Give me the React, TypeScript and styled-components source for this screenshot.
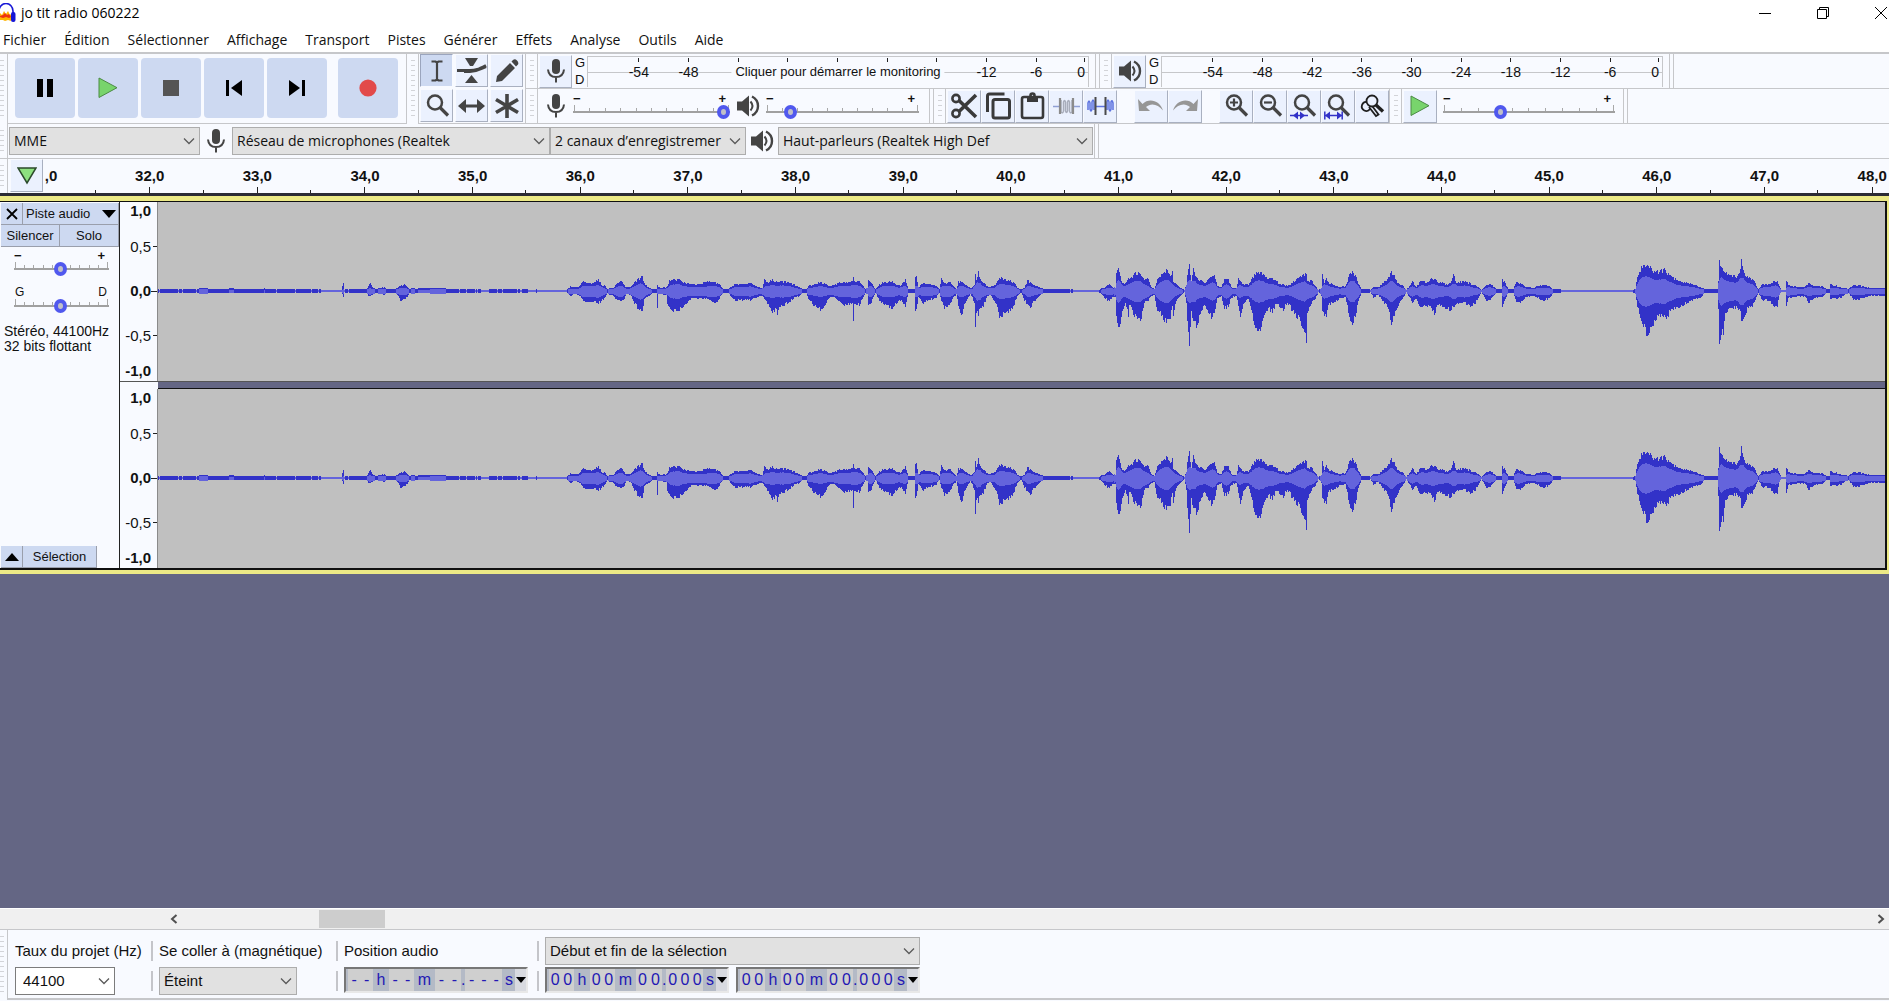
import React from "react";
import styled, { createGlobalStyle } from "styled-components";

const ui = `"Open Sans", "Noto Sans", sans-serif`;
const arial = `"Liberation Sans", Arial, sans-serif`;

const c = {
  bar: "#f8faff",
  line: "#c6c7ca",
  button: "#cdd9f1",
  tool: "#ebf1fe",
  icon: "#444444",
  slate: "#646684",
  wave: "#3232c8",
  rms: "#6464dc",
  grey: "#c0c0c0",
};

const Global = createGlobalStyle`
  * { box-sizing: border-box; }
  html, body { margin: 0; padding: 0; }
  body { background: #fff; color: #111; font-family: ${arial}; overflow: hidden; }
  button, select, input { font: inherit; color: inherit; margin: 0; }
  button { border: 0; padding: 0; cursor: default; }
  svg { display: block; }
`;

const Window = styled.div`
  display: flex;
  flex-direction: column;
  height: 100vh;
  overflow: hidden;
`;

/* ---------- title and menu ---------- */

const TitleBar = styled.header`
  display: flex;
  align-items: center;
  height: 27px;
  flex: none;
  padding-bottom: 1px;
  background: #fff;
`;

const Title = styled.h1`
  flex: 1;
  margin: 0 0 0 5px;
  font: 400 14px/24px ${ui};
  color: #000;
`;

const WindowButtons = styled.div`
  display: flex;
  gap: 32px;
  margin-right: -5px;
`;

const WindowButton = styled.button`
  display: grid;
  place-items: center;
  width: 26px;
  height: 26px;
  background: none;
`;

const MenuBar = styled.nav`
  display: flex;
  gap: 18px;
  height: 27px;
  flex: none;
  padding-left: 3px;
  background: #fff;
  border-bottom: 2px solid ${c.line};
`;

const MenuItem = styled.button`
  background: none;
  font: 400 14px/24px ${ui};
`;

/* ---------- toolbars ---------- */

const Toolbars = styled.div`
  display: flex;
  flex: none;
  background: ${c.bar};
`;

const Grip = styled.div<{ $edge?: boolean }>`
  flex: none;
  width: ${(p) => (p.$edge ? 8 : 13)}px;
  padding: 6px 3px 4px ${(p) => (p.$edge ? 0 : 4)}px;
  border: solid ${c.line};
  border-width: 0 1px 0 ${(p) => (p.$edge ? 0 : 1)}px;
  background: repeating-linear-gradient(#d3d4d8 0 1px, transparent 1px 5px) content-box;
`;

const Transport = styled.div`
  display: flex;
  align-items: center;
  gap: 11px;
  padding: 0 8px 2px 7px;
  border-bottom: 1px solid ${c.line};
`;

const TransportGroup = styled.div`
  display: grid;
  grid-auto-flow: column;
  grid-auto-columns: 60px;
  gap: 3px;
`;

const BigButton = styled.button`
  display: grid;
  place-items: center;
  width: 60px;
  height: 60px;
  border-radius: 4px;
  background: ${c.button};
`;

const ToolButton = styled.button<{ $on?: boolean; $wide?: boolean }>`
  display: grid;
  place-items: center;
  flex: none;
  width: ${(p) => (p.$wide ? 34 : 33)}px;
  height: 33px;
  background: ${(p) => (p.$on ? c.button : c.tool)};
  border: 1px solid;
  border-color: ${(p) => (p.$on ? "#9ba5bd #f8faff #f8faff #9ba5bd" : "#f8faff #a9b0c0 #a9b0c0 #f8faff")};
`;

const Tools = styled.div`
  display: grid;
  grid-template-columns: repeat(3, 33px);
  gap: 2px;
  padding: 0 2px 0 1px;
  align-content: start;
  border-bottom: 1px solid ${c.line};
`;

const Rows = styled.div`
  flex: 1;
  min-width: 0;
`;

const Row = styled.div`
  display: flex;
  align-items: stretch;
  height: 35px;
  border-bottom: 1px solid ${c.line};
  background: ${c.bar};
`;

const Section = styled.section<{ $end?: number }>`
  display: flex;
  flex: none;
  align-items: center;
  padding: 0 ${(p) => p.$end ?? 0}px 0 1px;
`;

const Divider = styled.div`
  flex: none;
  width: 4px;
  border-left: 1px solid ${c.line};
`;

const RowEnd = styled.div`
  width: 5px;
  flex: none;
  border: solid ${c.line};
  border-width: 0 1px;
`;

const Gap = styled.div`
  width: 17px;
`;

const IconCell = styled.span<{ $w: number }>`
  display: grid;
  place-items: center;
  flex: none;
  width: ${(p) => p.$w}px;
`;

/* ---------- level meters ---------- */

const MeterChannels = styled.div`
  display: flex;
  flex-direction: column;
  width: 15px;
  padding-left: 3px;
  font-size: 13px;
  line-height: 17px;
`;

const MeterBox = styled.div`
  position: relative;
  display: flex;
  width: 502px;
  height: 31px;
  padding-left: 26px;
  border: solid ${c.line};
  border-width: 1px 1px 0;
  background: linear-gradient(${c.line}, ${c.line}) 0 15px / 100% 1px no-repeat;
`;

const MeterScale = styled.div`
  display: grid;
  grid-template-columns: repeat(9, 1fr);
  flex: 0 0 447px;
`;

const MeterMark = styled.div<{ $end?: boolean }>`
  display: flex;
  flex-direction: column;
  flex: 1;
  gap: 2px;
  align-items: ${(p) => (p.$end ? "flex-end" : "center")};
  padding-right: ${(p) => (p.$end ? 3 : 0)}px;
  font-size: 14px;
  line-height: 16px;
  &::before {
    content: "";
    width: 1px;
    height: 4px;
    margin-top: 1px;
    background: #222;
  }
`;

const MeterHint = styled.button`
  position: absolute;
  left: 50%;
  top: 5px;
  height: 20px;
  padding: 0 4px;
  transform: translateX(-50%);
  white-space: nowrap;
  background: ${c.bar};
  font-size: 13px;
  line-height: 20px;
`;

/* ---------- sliders ---------- */

const SliderBox = styled.label<{ $w?: number }>`
  display: flex;
  flex-direction: column;
  flex: none;
  width: ${(p) => (p.$w ? p.$w + "px" : "auto")};
`;

const SliderEnds = styled.span<{ $letters?: boolean }>`
  display: flex;
  justify-content: space-between;
  padding: 0 ${(p) => (p.$letters ? 2 : 4)}px 0 ${(p) => (p.$letters ? 1 : 0)}px;
  font-size: ${(p) => (p.$letters ? 12 : 13)}px;
  line-height: ${(p) => (p.$letters ? 14 : 12)}px;
  font-weight: ${(p) => (p.$letters ? 400 : 700)};
`;

const SliderStack = styled.span`
  display: grid;
  & > * { grid-area: 1 / 1; }
`;

const SliderTicks = styled.span`
  display: flex;
  justify-content: space-between;
  align-items: flex-end;
  height: 8px;
  padding: 0 1px;
  border-bottom: 2px solid #a0a0a0;
  i { width: 1px; height: 3px; background: #a8a8a8; }
  i:first-child, i:last-child { height: 6px; }
`;

const Range = styled.input`
  appearance: none;
  width: 100%;
  height: 14px;
  background: transparent;
  &::-webkit-slider-thumb {
    appearance: none;
    width: 13px;
    height: 14px;
    border: 4px solid #5058ee;
    border-radius: 50%;
    background: #c0c0c8;
  }
`;

/* ---------- drop-downs ---------- */

const SelectBox = styled.span<{ $w?: number; $white?: boolean }>`
  display: grid;
  flex: none;
  align-items: center;
  width: ${(p) => (p.$w ? p.$w + "px" : "auto")};
  & > * { grid-area: 1 / 1; }
  svg { justify-self: end; margin-right: 5px; pointer-events: none; }
  select {
    appearance: none;
    width: 100%;
    height: 28px;
    padding: 0 22px 0 ${(p) => (p.$white ? 7 : 4)}px;
    border: 1px solid ${(p) => (p.$white ? "#7c7c7c" : "#adadad")};
    border-radius: 0;
    background: ${(p) => (p.$white ? "#fff" : "#e1e1e1")};
    text-overflow: clip;
  }
`;

const DeviceRow = styled(Row)`
  flex: none;
  font: 400 14px/20px ${ui};
`;

const Devices = styled.div`
  display: flex;
  align-items: center;
  padding: 0 1px;
`;

/* ---------- timeline ---------- */

const Timeline = styled.div`
  display: flex;
  flex: none;
  height: 37px;
  background: ${c.bar};
  border-bottom: 3px solid #2b2b35;
`;

const PinSlot = styled.div`
  display: flex;
  flex: none;
  width: 34px;
  padding-left: 2px;
`;

const Ruler = styled.div`
  flex: 1;
  min-width: 0;
  overflow: hidden;
`;

const RulerMarks = styled.div`
  display: flex;
  height: 100%;
  margin-left: -2.914%;
`;

const Second = styled.div<{ $first?: boolean }>`
  display: flex;
  flex-direction: column;
  flex: 0 0 5.664%;
  justify-content: space-between;
  align-items: center;
  padding: 8px 0 0 ${(p) => (p.$first ? 18 : 0)}px;
  font: 700 15px/18px ${arial};
  background: linear-gradient(#222, #222) right bottom / 1px 3px no-repeat;
  &::after {
    content: "";
    width: ${(p) => (p.$first ? 0 : 1)}px;
    height: 6px;
    background: #222;
  }
`;

/* ---------- tracks ---------- */

const Canvas = styled.main`
  flex: 1;
  min-height: 0;
  background: ${c.slate};
`;

const Track = styled.section`
  display: flex;
  border: solid #ece986;
  border-width: 5px 2px 4px 0;
`;

const TrackInner = styled.div`
  display: flex;
  flex: 1;
  min-width: 0;
  border: solid #101010;
  border-width: 1px 2px 2px 0;
`;

const Panel = styled.div`
  display: flex;
  flex-direction: column;
  justify-content: space-between;
  flex: none;
  width: 120px;
  padding: 1px 0 0 1px;
  background: ${c.bar};
  border-right: 1px solid #222;
  font-size: 13px;
  line-height: 15px;
`;

const PanelRow = styled.div<{ $cols: string }>`
  display: grid;
  grid-template-columns: ${(p) => p.$cols};
`;

const PanelButton = styled.button<{ $spread?: boolean }>`
  display: flex;
  align-items: center;
  justify-content: ${(p) => (p.$spread ? "space-between" : "center")};
  height: 22px;
  padding: ${(p) => (p.$spread ? "0 2px 0 3px" : "0")};
  background: ${c.button};
  border: solid #9a9fac;
  border-width: 0 1px 1px 0;
`;

const PanelSliders = styled.div`
  display: flex;
  flex-direction: column;
  gap: 9px;
  width: 95px;
  margin: 3px 0 0 13px;
`;

const Info = styled.p`
  margin: 11px 0 0 3px;
  font-size: 14px;
  line-height: 15px;
  white-space: nowrap;
`;

const Channels = styled.div`
  flex: 1;
  min-width: 0;
`;

const ChannelGap = styled.div`
  display: grid;
  grid-template-columns: 38px 1fr;
  height: 8px;
  background: ${c.bar};
  border-top: 1px solid #555;
  &::after {
    content: "";
    grid-column: 2;
    background: ${c.slate};
    border-bottom: 1px solid #111;
  }
`;

const Channel = styled.div`
  display: grid;
  grid-template-columns: 38px 1fr;
  height: 179px;
  background: ${c.grey};
`;

const Scale = styled.div`
  display: grid;
  grid-template-rows: 1fr 2fr 2fr 2fr 1fr;
  padding-bottom: 1px;
  background: ${c.bar};
  border-right: 1px solid #8a8a8a;
`;

const ScaleMark = styled.div<{ $bold?: boolean; $at?: string; $tick: number }>`
  display: flex;
  align-items: center;
  align-self: ${(p) => p.$at ?? "center"};
  justify-content: flex-end;
  gap: ${(p) => 6 - p.$tick}px;
  font-size: 15px;
  line-height: 18px;
  font-weight: ${(p) => (p.$bold ? 700 : 400)};
  &::after {
    content: "";
    width: ${(p) => p.$tick}px;
    height: 1px;
    background: #222;
  }
`;

const WaveSvg = styled.svg`
  width: 100%;
  height: 100%;
`;

/* ---------- scrollbar ---------- */

const ScrollRow = styled.div`
  display: flex;
  flex: none;
  height: 22px;
  padding: 1px 0 1px 165px;
  background: #f0f0f0;
  border-top: 1px solid #fff;
  border-bottom: 1px solid ${c.line};
`;

const ScrollArrow = styled.button`
  display: grid;
  place-items: center;
  width: 17px;
  background: none;
`;

const ScrollTrack = styled.div`
  flex: 1;
  display: flex;
`;

const ScrollThumb = styled.div`
  margin-left: 8.1%;
  width: 3.9%;
  background: #cdcdcd;
`;

/* ---------- selection bar ---------- */

const SelectionBar = styled.footer`
  display: flex;
  flex: none;
  height: 71px;
  padding-bottom: 1px;
  background: ${c.bar};
  font-size: 15px;
  line-height: 20px;
`;

const SelectionBody = styled.div`
  display: flex;
  flex: 1;
  padding: 7px 0 3px 7px;
  border-bottom: 2px solid ${c.line};
`;

const Field = styled.div<{ $w: number }>`
  display: flex;
  flex-direction: column;
  gap: 2px;
  flex: none;
  width: ${(p) => p.$w}px;
`;

const FieldLabel = styled.label`
  height: 28px;
  line-height: 28px;
  white-space: nowrap;
`;

const Bars = styled.div`
  display: flex;
  flex-direction: column;
  gap: 10px;
  flex: none;
  width: 8px;
  margin-left: 8px;
  padding-top: 4px;
  &::before, &::after {
    content: "";
    width: 2px;
    height: 20px;
    background: #c4c5ca;
  }
`;

const TimeRow = styled.div`
  display: flex;
  gap: 7px;
`;

const TimeBox = styled.div`
  display: flex;
  width: 184px;
  height: 26px;
  padding-left: 2px;
  border: 2px solid;
  border-color: #777 #e8e8e8 #e8e8e8 #777;
  background: #b4bac6;
  color: #2318b4;
  font-size: 16px;
  line-height: 22px;
`;

const TimePart = styled.span<{ $w: number; $digits?: boolean }>`
  display: flex;
  flex: 0 0 ${(p) => p.$w}px;
  justify-content: space-around;
  background: ${(p) => (p.$digits ? "#cfcfcf" : "transparent")};
`;

const TimeMenu = styled.button`
  flex: 1;
  display: grid;
  place-items: center;
  background: #d8dae0;
`;

/* ---------- icons ---------- */

const Mic = () => (
  <svg width="20" height="26" viewBox="0 0 20 26" fill="none" stroke={c.icon} strokeWidth="2">
    <rect x="6" y="1" width="8" height="15" rx="4" fill={c.icon} stroke="none" />
    <path d="M2 11.500c.4 5 3.400 7.500 8 7.500s7.600-2.500 8-7.500M10 19v5.500" />
  </svg>
);

const Speaker = () => (
  <svg width="24" height="22" viewBox="0 0 24 22" fill="none" stroke={c.icon} strokeWidth="2">
    <path d="M1 6.500h5l7-6v21l-7-6H1z" fill={c.icon} stroke="none" />
    <path d="M14.500 6.500q4 4.500 0 9" />
    <path d="M16 1.500c8 4 8 15 0 19" strokeWidth="2.400" />
  </svg>
);

const Chevron = () => (
  <svg width="12" height="8" viewBox="0 0 12 8" fill="none" stroke="#5a5a5a" strokeWidth="1.300">
    <path d="M1 1.500l5 5 5-5" />
  </svg>
);

const PlayIcon = () => (
  <svg width="20" height="22" viewBox="0 0 20 22">
    <path d="M1 1v19.500L19 10.700z" fill="#78d46c" stroke="#4b8a45" />
  </svg>
);

const Lens = ({ children }: { children?: React.ReactNode }) => (
  <svg width="28" height="28" viewBox="0 0 28 28" fill="none" stroke={c.icon} strokeWidth="2.200">
    <circle cx="12" cy="10.500" r="7" strokeWidth="2.500" />
    <path d="M17 15.500l8 8" strokeWidth="3.200" />
    {children}
  </svg>
);

const Logo = () => (
  <svg width="16" height="20" viewBox="0 0 16 20">
    <path d="M-1 13V8a7 7.500 0 0 1 14 0v5" fill="none" stroke="#1717d6" strokeWidth="1.600" />
    <path d="M0 10l2 2 2-4 2 3 2-3 2 4 1-1v7l-3-1-3 1-2-1H0z" fill="#ffb400" />
    <path d="M0 13l3-1 2-2 2 2 2-1 2 3-2 1-3-1-3 1-3-1z" fill="#ee3311" />
    <rect x="11" y="9" width="4.500" height="10" rx="2" fill="#1717d6" />
  </svg>
);

const SelectTool = () => (
  <svg width="14" height="24" viewBox="0 0 14 24" fill="none" stroke={c.icon} strokeWidth="2.200">
    <path d="M1.500 2.500h4l1.500 1 1.500-1h4M7 3v18M1.500 21.500h4l1.500-1 1.500 1h4" />
  </svg>
);

const EnvelopeTool = () => (
  <svg width="32" height="28" viewBox="0 0 32 28" fill={c.icon}>
    <path d="M9 1h13l-5 8h-3zM9 26h13l-6.500-8z" />
    <path d="M1 13.500h13c6 0 8-1 16-5M8 14.500h6c7 0 9-2 16-5" fill="none" stroke={c.icon} strokeWidth="3" />
  </svg>
);

const DrawTool = () => (
  <svg width="26" height="26" viewBox="0 0 26 26" fill={c.icon}>
    <path d="M2 24l1-6L16 5l5 5L8 23zM17.500 3.500l1.500-1.500q2-1.500 4 0.500t1 4L22 8.500z" />
  </svg>
);

const ShiftTool = () => (
  <svg width="27" height="16" viewBox="0 0 27 16" fill={c.icon}>
    <path d="M0 8l8-7v5.400h11V1l8 7-8 7V9.600H8V15z" />
  </svg>
);

const MultiTool = () => (
  <svg width="26" height="26" viewBox="0 0 26 26" stroke={c.icon} strokeWidth="3.600">
    <path d="M13 1v24M2 6.500l22 13M24 6.500L2 19.500" />
  </svg>
);

const Cut = () => (
  <svg width="28" height="26" viewBox="0 0 28 26" fill="none" stroke="#3a3a3a" strokeWidth="2.600">
    <circle cx="6" cy="5.500" r="3.600" />
    <circle cx="6" cy="20.500" r="3.600" />
    <path d="M9 7.500L26 24M9 18.500L26 2" strokeWidth="3.600" />
  </svg>
);

const Copy = () => (
  <svg width="27" height="28" viewBox="0 0 27 28" fill="none" stroke="#3a3a3a" strokeWidth="3">
    <path d="M2.500 20V4q0-2 2-2h15" />
    <rect x="8" y="7.500" width="16.500" height="18.500" rx="2" />
  </svg>
);

const Paste = () => (
  <svg width="25" height="28" viewBox="0 0 25 28" fill="none" stroke="#3a3a3a" strokeWidth="2.600">
    <rect x="2" y="5" width="21" height="21" rx="2" />
    <path d="M7 4h11v6H7z" fill="#3a3a3a" stroke="none" />
    <circle cx="12.500" cy="3.500" r="2" />
  </svg>
);

const Trim = () => (
  <svg width="27" height="20" viewBox="0 0 27 20" fill="none">
    <path d="M0 10.500h6M21 10.500h6" stroke="#8f9fd4" strokeWidth="1.500" />
    <path d="M8 4v12q2 2 2.500-1V6q1-3 2 0v9q1 3 2 0V6q1-3 2 0v9q.5 3 2.500 1V4" stroke="#a8adbb" strokeWidth="1.500" />
    <path d="M7 2v16M20 2v16" stroke="#8b8b8b" strokeWidth="2.200" />
  </svg>
);

const Silence = () => (
  <svg width="27" height="20" viewBox="0 0 27 20" fill="none">
    <path d="M1 14V7q1-4 2 0v6q1 4 2 0V6q1-4 2 0v8M20 14V6q1-4 2 0v7q1 4 2 0V6q1-3 2 1v7M8 10.500h11" stroke="#5d73e0" strokeWidth="1.500" />
    <path d="M8.500 1v18M18.500 1v18" stroke="#4a4a4a" strokeWidth="2" />
  </svg>
);

const Undo = ({ flip }: { flip?: boolean }) => (
  <svg width="26" height="14" viewBox="0 0 26 14" fill="#969696">
    <g transform={flip ? "matrix(-1 0 0 1 26 0)" : undefined}>
      <path d="M0 0l1 12h11l-4-4C13 3.500 20 5 25 11.500 22 1.500 11-1.500 4.500 5z" />
    </g>
  </svg>
);

const ZoomToggle = () => (
  <svg width="26" height="26" viewBox="0 0 26 26" fill="none" stroke="#1f1f1f" strokeWidth="1.800">
    <circle cx="13" cy="8" r="5.500" />
    <path d="M8 9a4.500 4.500 0 1 0 3 7M10 14l7 9 2.500-1.500-6-8" />
    <path d="M17 12l7 6.500" strokeWidth="3.400" />
  </svg>
);

/* ---------- controls ---------- */

const Slider = ({ label, value, w, ends = ["−", "+"], letters }: {
  label: string; value: number; w?: number; ends?: string[]; letters?: boolean;
}) => (
  <SliderBox $w={w}>
    <SliderEnds $letters={letters}>{ends.map((e) => <span key={e}>{e}</span>)}</SliderEnds>
    <SliderStack>
      <SliderTicks>{Array.from({ length: 11 }, (_, i) => <i key={i} />)}</SliderTicks>
      <Range type="range" min={0} max={100} defaultValue={value} aria-label={label} />
    </SliderStack>
  </SliderBox>
);

const Select = ({ id, label, text, w, white }: {
  id: string; label?: string; text: string; w?: number; white?: boolean;
}) => (
  <SelectBox $w={w} $white={white}>
    <select id={id} aria-label={label}><option>{text}</option></select>
    <Chevron />
  </SelectBox>
);

const Meter = ({ all }: { all: boolean }) => {
  const marks = [-54, -48, -42, -36, -30, -24, -18, -12, -6];
  const hidden = (m: number) => !all && m > -48 && m < -12;
  return (
    <>
      <MeterChannels><span>G</span><span>D</span></MeterChannels>
      <MeterBox>
        <MeterScale>
          {marks.map((m) => <MeterMark key={m}>{hidden(m) ? "" : m}</MeterMark>)}
        </MeterScale>
        <MeterMark $end>0</MeterMark>
        {!all && <MeterHint>Cliquer pour démarrer le monitoring</MeterHint>}
      </MeterBox>
    </>
  );
};

const Time = ({ label, d }: { label: string; d: string }) => {
  const digits = (n: number) => Array.from({ length: n }, (_, i) => <span key={i}>{d}</span>);
  return (
    <TimeBox role="group" aria-label={label}>
      <TimePart $w={25} $digits>{digits(2)}</TimePart>
      <TimePart $w={16}>h</TimePart>
      <TimePart $w={25} $digits>{digits(2)}</TimePart>
      <TimePart $w={21}>m</TimePart>
      <TimePart $w={26} $digits>{digits(2)}</TimePart>
      <TimePart $w={4}>.</TimePart>
      <TimePart $w={37} $digits>{digits(3)}</TimePart>
      <TimePart $w={13}>s</TimePart>
      <TimeMenu aria-label={`Format, ${label}`}>
        <svg width="10" height="6" viewBox="0 0 10 6"><path d="M0 0h10L5 6z" /></svg>
      </TimeMenu>
    </TimeBox>
  );
};

/* ---------- waveform: position, peak above and peak below the axis ---------- */

const peaks: number[] = [
  158,1.5,1.5, 196,1.5,1.5, 199,2.5,2.5, 205,3,3, 212,1.5,1.5, 230,2.5,2, 262,1.5,1.5, 264,2.5,2, 268,1.5,1.5, 290,1.5,1.5,
  300,1.5,1.5, 320,1.5,1.5, 325,.7,.7, 341,.7,.7, 343,8,6, 344,1.5,1.5, 366,1.5,1.5, 368,5,5, 370,8,5, 373,3,3, 376,2,2,
  384,4,4, 387,1.5,1.5, 395,2,2, 398,4,5, 400,5,10, 404,7,8, 407,4,6, 409,2,2, 413,3,3, 416,2,2, 420,3,2, 445,3,3,
  447,1.5,1.5, 480,1.5,1.5, 482,.7,.7, 488,1.5,1.5, 527,1.5,1.5, 530,.7,.7, 536,1.5,1.5, 543,.7,.7, 566,.7,.7,
  567,2,2, 570,5,5, 574,4,3, 578,4,4, 583,10,10, 590,8,11, 595,9,10, 598,12,13, 601,6,10, 605,5,6, 607,1.5,2, 609,3,4,
  613,3,5, 615,6,8, 620,10,10, 624,6,8, 626,4,3, 630,4,4, 634,9,13, 638,13,18, 642,15,20, 644,8,8, 649,3,5, 652,1.5,1.5,
  656,1.5,1.5, 657,6,17, 658,4,3, 660,3,3, 666,4,4, 667,5,13, 669,11,16, 673,12,21, 678,12,20, 682,9,17, 687,8,12,
  691,7,7, 698,7,8, 703,9,8, 709,10,9, 714,9,12, 717,8,11, 720,6,5, 723,2,2, 728,2,2, 732,5,7, 735,7,10, 743,7,9,
  751,8,9, 758,4,6, 762,3,5, 764,12,8, 768,8,13, 772,12,22, 776,10,18, 777,9,24, 780,10,16, 787,9,13, 793,7,8,
  800,3,4, 803,1.5,1.5, 806,1.5,1.5, 808,5,8, 814,7,15, 820,9,20, 824,8,15, 828,5,8, 833,6,6, 838,8,10, 843,9,14,
  847,8,14, 852,10,12, 853,14,30, 854,10,13, 859,10,15, 862,6,8, 865,2,2, 867,3,3, 868,11,14, 871,8,12, 875,1.5,2,
  879,7,10, 884,9,14, 892,10,18, 897,6,12, 901,6,9, 905,12,16, 908,2,2, 913,1.5,1.5, 914,2,2, 915,14,20, 916,15,18,
  918,4,6, 923,8,13, 928,7,9, 936,5,7, 939,1.5,1.5, 941,13,10, 944,8,18, 950,9,12, 956,2,3, 958,10,15, 961,9,24,
  966,6,10, 970,3,3, 974,6,12, 975,17,36, 976,11,22, 978,20,25, 980,12,17, 983,8,16, 987,5,5, 990,4,4, 996,8,13,
  999,13,27, 1005,12,22, 1010,11,20, 1014,8,14, 1017,3,5, 1021,1.5,1.5, 1024,3,10, 1027,11,13, 1030,9,17, 1034,6,10,
  1041,3,3, 1045,1.5,1.5, 1064,1.5,1.5, 1072,1.5,1.5, 1074,.7,.7, 1096,.7,.7, 1098,.7,.7, 1102,3,4, 1105,4,8, 1109,7,10,
  1112,4,6, 1115,3,6, 1116,18,25, 1118,23,36, 1120,15,33, 1122,8,20, 1125,8,12, 1128,13,26, 1129,12,14, 1134,18,26, 1138,19,27,
  1141,15,28, 1144,11,12, 1148,12,10, 1151,4,5, 1154,2,4, 1157,12,20, 1161,17,25, 1166,22,32, 1170,15,28, 1172,20,15,
  1173,9,25, 1176,7,10, 1180,3,5, 1184,1,1, 1186,6,12, 1187,16,30, 1189,27,55, 1191,10,20, 1193,23,30, 1196,14,37,
  1200,11,23, 1204,8,14, 1208,12,22, 1211,14,28, 1214,16,22, 1217,5,7, 1221,4,5, 1224,12,18, 1228,12,16, 1231,4,7,
  1236,3,5, 1238,13,15, 1240,10,26, 1243,7,13, 1248,6,8, 1252,14,22, 1254,17,34, 1258,19,40, 1260,19,40, 1264,16,24,
  1268,12,17, 1272,13,22, 1276,10,13, 1280,7,17, 1283,7,20, 1287,5,12, 1292,8,20, 1296,12,27, 1300,15,30, 1303,17,38,
  1305,18,42, 1306,17,52, 1307,10,22, 1311,11,13, 1315,5,8, 1318,1,1, 1321,3,5, 1322,17,20, 1324,8,25, 1326,13,26,
  1328,9,14, 1333,6,12, 1340,4,7, 1345,5,6, 1348,14,22, 1352,20,34, 1355,16,26, 1358,7,10, 1361,2,2, 1370,1.5,1.5,
  1373,4,7, 1378,4,4, 1382,8,10, 1387,12,16, 1391,20,34, 1394,16,25, 1397,8,17, 1402,6,8, 1406,1,1, 1412,10,12,
  1416,4,8, 1420,10,16, 1427,9,16, 1431,13,17, 1434,12,24, 1437,9,14, 1442,9,16, 1446,7,18, 1450,8,20, 1453,17,16,
  1456,8,13, 1463,10,11, 1470,8,16, 1475,6,13, 1481,1,1, 1486,6,10, 1490,7,9, 1496,1.5,1.5, 1501,1.5,2, 1502,12,16,
  1505,8,8, 1508,1.5,1.5, 1513,2,2, 1516,9,11, 1520,8,12, 1526,4,6, 1533,3,5, 1537,5,7, 1543,6,10, 1549,5,7,
  1553,1.5,2, 1560,1.5,1.5, 1561,.7,.7, 1632,.7,.7, 1635,2,3, 1637,14,16, 1641,25,30, 1643,26,36, 1647,26,45, 1651,23,36,
  1655,19,30, 1660,21,26, 1664,23,24, 1666,18,28, 1670,16,20, 1675,13,18, 1680,10,16, 1688,8,12, 1694,6,8, 1700,4,7,
  1704,2,2, 1717,1.5,1.5, 1718,10,18, 1719,31,53, 1721,24,44, 1723,20,44, 1725,18,22, 1730,16,17, 1737,15,17,
  1739,18,18, 1741,32,30, 1744,18,26, 1748,13,17, 1752,12,16, 1754,10,11, 1758,1.5,1.5, 1762,7,9, 1769,7,10,
  1773,10,15, 1777,10,16, 1779,5,4, 1781,.7,.7, 1785,.7,.7, 1786,10,15, 1788,6,7, 1798,4,5, 1805,5,6, 1808,8,12,
  1812,6,9, 1818,5,6, 1822,5,6, 1826,2,2, 1829,1.5,1.5, 1830,7,8, 1840,4,7, 1848,2,2, 1853,6,9, 1858,6,9, 1865,4,6,
  1870,3,5, 1886,3,5,
];

const START = 158;
const LENGTH = 1727;

function outline(up: number[], down: number[]) {
  const top = up.map((v, i) => `L${i} ${-v}H${i + 1}`).join("");
  const bottom = down.map((v, i) => `L${i + 1} ${v}H${i}`).reverse().join("");
  return `M0 0${top}${bottom}Z`;
}

const shapes = (() => {
  const up: number[] = [];
  const down: number[] = [];
  let k = 0;
  let seed = 7;
  const grain = () => {
    seed = (seed * 16807) % 2147483647;
    return seed / 2147483647;
  };
  for (let x = START; x < START + LENGTH; x++) {
    while (k + 5 < peaks.length - 1 && peaks[k + 3] <= x) k += 3;
    const t = (x - peaks[k]) / (peaks[k + 3] - peaks[k]);
    const at = (n: number) => peaks[k + n] + (peaks[k + 3 + n] - peaks[k + n]) * t;
    const faint = at(1) <= 1.6 && grain() > 0.92;
    const put = (v: number) => {
      if (faint) return 1;
      if (v < 3) return Math.round(v + 0.1);
      return Math.round(v * (t === 0 ? 1 : 0.84 + grain() * 0.24));
    };
    up.push(Math.max(1, put(at(1))));
    down.push(Math.max(1, put(at(2))));
  }
  const rms = up.map((v, i) => {
    if (v <= 1 && down[i] <= 1) return 1;
    if (v <= 2 && down[i] <= 2) return 0;
    let sum = 0;
    let n = 0;
    for (let j = Math.max(0, i - 2); j <= Math.min(up.length - 1, i + 2); j++) {
      sum += Math.min(up[j], down[j]);
      n++;
    }
    return Math.min(v, Math.round((sum / n) * 0.58));
  });
  const below = rms.map((v, i) => (v ? Math.min(v + 1, down[i]) : 0));
  return { peak: outline(up, down), rms: outline(rms, below) };
})();

const Wave = () => (
  <WaveSvg viewBox={`0 -89 ${LENGTH} 179`} preserveAspectRatio="none" shapeRendering="crispEdges" role="img" aria-label="Forme d’onde">
    <path d={shapes.peak} fill={c.wave} />
    <path d={shapes.rms} fill={c.rms} />
  </WaveSvg>
);

const ChannelView = () => (
  <Channel>
    <Scale>
      <ScaleMark $bold $at="start" $tick={0}>1,0</ScaleMark>
      <ScaleMark $tick={4}>0,5</ScaleMark>
      <ScaleMark $bold $tick={6}>0,0</ScaleMark>
      <ScaleMark $tick={4}>-0,5</ScaleMark>
      <ScaleMark $bold $at="end" $tick={0}>-1,0</ScaleMark>
    </Scale>
    <Wave />
  </Channel>
);

const menus = ["Fichier", "Édition", "Sélectionner", "Affichage", "Transport", "Pistes", "Générer", "Effets", "Analyse", "Outils", "Aide"];
const seconds = Array.from({ length: 17 }, (_, i) => `${32 + i},0`);

export default function App() {
  return (
    <Window>
      <Global />
      <TitleBar>
        <Logo />
        <Title>jo tit radio 060222</Title>
        <WindowButtons>
          <WindowButton aria-label="Réduire">
            <svg width="12" height="12" stroke="#000"><path d="M0 6.500h12" /></svg>
          </WindowButton>
          <WindowButton aria-label="Restaurer">
            <svg width="12" height="12" stroke="#000" fill="none"><path d="M.5 2.500h9v9h-9zM2.500 2.500v-2h9v9h-2" /></svg>
          </WindowButton>
          <WindowButton aria-label="Fermer">
            <svg width="12" height="12" stroke="#000"><path d="M0 0l12 12M12 0L0 12" /></svg>
          </WindowButton>
        </WindowButtons>
      </TitleBar>
      <MenuBar>{menus.map((m) => <MenuItem key={m}>{m}</MenuItem>)}</MenuBar>

      <Toolbars>
        <Grip $edge />
        <Transport>
          <TransportGroup>
            <BigButton aria-label="Pause">
              <svg width="16" height="18"><path d="M0 0h6v18H0zM10 0h6v18h-6z" /></svg>
            </BigButton>
            <BigButton aria-label="Lecture"><PlayIcon /></BigButton>
            <BigButton aria-label="Arrêter">
              <svg width="16" height="16"><path d="M0 0h16v16H0z" fill="#555" /></svg>
            </BigButton>
            <BigButton aria-label="Début">
              <svg width="16" height="16"><path d="M0 0h3v16H0zM16 0v16L5 8z" /></svg>
            </BigButton>
            <BigButton aria-label="Fin">
              <svg width="16" height="16"><path d="M13 0h3v16h-3zM0 0v16l11-8z" /></svg>
            </BigButton>
          </TransportGroup>
          <BigButton aria-label="Enregistrer">
            <svg width="18" height="18"><circle cx="9" cy="9" r="8.600" fill="#e24a4a" /></svg>
          </BigButton>
        </Transport>
        <Grip />
        <Tools>
          <ToolButton $on aria-label="Sélection"><SelectTool /></ToolButton>
          <ToolButton aria-label="Niveau"><EnvelopeTool /></ToolButton>
          <ToolButton aria-label="Dessin"><DrawTool /></ToolButton>
          <ToolButton aria-label="Zoom"><Lens /></ToolButton>
          <ToolButton aria-label="Glissement"><ShiftTool /></ToolButton>
          <ToolButton aria-label="Multi-outils"><MultiTool /></ToolButton>
        </Tools>
        <Rows>
          <Row>
            <Grip />
            <Section $end={6}>
              <ToolButton aria-label="Niveau d’enregistrement"><Mic /></ToolButton>
              <Meter all={false} />
            </Section>
            <Divider />
            <Grip />
            <Section $end={6}>
              <ToolButton aria-label="Niveau de lecture"><Speaker /></ToolButton>
              <Meter all />
            </Section>
            <RowEnd />
          </Row>
          <Row>
            <Grip />
            <Section $end={10}>
              <IconCell $w={34}><Mic /></IconCell>
              <Slider label="Volume d’enregistrement" value={100} w={157} />
              <IconCell $w={36}><Speaker /></IconCell>
              <Slider label="Volume de lecture" value={13} w={153} />
            </Section>
            <Divider />
            <Grip />
            <Section>
              <ToolButton $wide aria-label="Couper"><Cut /></ToolButton>
              <ToolButton $wide aria-label="Copier"><Copy /></ToolButton>
              <ToolButton $wide aria-label="Coller"><Paste /></ToolButton>
              <ToolButton $wide aria-label="Rogner"><Trim /></ToolButton>
              <ToolButton $wide aria-label="Silence"><Silence /></ToolButton>
              <Gap />
              <ToolButton $wide aria-label="Annuler"><Undo /></ToolButton>
              <ToolButton $wide aria-label="Refaire"><Undo flip /></ToolButton>
              <Gap />
              <ToolButton $wide aria-label="Zoom avant"><Lens><path d="M8 10.500h8M12 6.500v8" /></Lens></ToolButton>
              <ToolButton $wide aria-label="Zoom arrière"><Lens><path d="M8 10.500h8" /></Lens></ToolButton>
              <ToolButton $wide aria-label="Zoom sur la sélection">
                <Lens><path d="M0 23.500h18" stroke={c.wave} strokeWidth="1.500" /><path d="M3 23.500l5-4v8zM15 23.500l-5-4v8z" fill={c.wave} stroke="none" /></Lens>
              </ToolButton>
              <ToolButton $wide aria-label="Zoom sur le projet">
                <Lens><path d="M.8 19.500v8M18.200 19.500v8M1 23.500h17" stroke={c.wave} strokeWidth="1.500" /><path d="M1 23.500l5-4v8zM18 23.500l-5-4v8z" fill={c.wave} stroke="none" /></Lens>
              </ToolButton>
              <ToolButton $wide aria-label="Basculer le zoom"><ZoomToggle /></ToolButton>
            </Section>
            <Grip />
            <Section $end={8}>
              <ToolButton $wide aria-label="Lecture à vitesse"><PlayIcon /></ToolButton>
              <IconCell $w={6} />
              <Slider label="Vitesse de lecture" value={32} w={172} />
            </Section>
            <RowEnd />
          </Row>
        </Rows>
      </Toolbars>

      <DeviceRow>
        <Grip $edge />
        <Devices>
          <Select id="host" label="Hôte audio" text="MME" w={191} />
          <IconCell $w={32}><Mic /></IconCell>
          <Select id="input" label="Entrée" text="Réseau de microphones (Realtek" w={318} />
          <Select id="channels" label="Canaux" text="2 canaux d’enregistremer" w={196} />
          <IconCell $w={32}><Speaker /></IconCell>
          <Select id="output" label="Sortie" text="Haut-parleurs (Realtek High Def" w={315} />
        </Devices>
        <RowEnd />
      </DeviceRow>

      <Timeline>
        <Grip $edge />
        <PinSlot>
          <ToolButton aria-label="Épingler la tête de lecture">
            <svg width="20" height="18" viewBox="0 0 20 18"><path d="M1 1h18l-9 15z" fill="#8de07f" stroke="#2c4a2c" strokeWidth="1.500" /></svg>
          </ToolButton>
        </PinSlot>
        <Ruler>
          <RulerMarks>
            <Second $first>,0</Second>
            {seconds.map((s) => <Second key={s}>{s}</Second>)}
          </RulerMarks>
        </Ruler>
      </Timeline>

      <Canvas>
        <Track>
          <TrackInner>
            <Panel>
              <div>
                <PanelRow $cols="22px 1fr">
                  <PanelButton aria-label="Fermer la piste">
                    <svg width="12" height="12" stroke="#000" strokeWidth="1.800"><path d="M1 1l10 10M11 1L1 11" /></svg>
                  </PanelButton>
                  <PanelButton $spread>
                    Piste audio
                    <svg width="14" height="8"><path d="M0 0h14L7 8z" /></svg>
                  </PanelButton>
                </PanelRow>
                <PanelRow $cols="59px 1fr">
                  <PanelButton>Silencer</PanelButton>
                  <PanelButton>Solo</PanelButton>
                </PanelRow>
                <PanelSliders>
                  <Slider label="Gain" value={49} />
                  <Slider label="Panoramique" value={49} ends={["G", "D"]} letters />
                </PanelSliders>
                <Info>Stéréo, 44100Hz<br />32 bits flottant</Info>
              </div>
              <PanelRow $cols="22px 74px">
                <PanelButton aria-label="Réduire la piste">
                  <svg width="14" height="8"><path d="M0 8h14L7 0z" /></svg>
                </PanelButton>
                <PanelButton>Sélection</PanelButton>
              </PanelRow>
            </Panel>
            <Channels>
              <ChannelView />
              <ChannelGap />
              <ChannelView />
            </Channels>
          </TrackInner>
        </Track>
      </Canvas>

      <ScrollRow>
        <ScrollArrow aria-label="Défiler à gauche">
          <svg width="8" height="10" fill="none" stroke="#505050" strokeWidth="2"><path d="M6.500 1L2 5l4.500 4" /></svg>
        </ScrollArrow>
        <ScrollTrack><ScrollThumb /></ScrollTrack>
        <ScrollArrow aria-label="Défiler à droite">
          <svg width="8" height="10" fill="none" stroke="#505050" strokeWidth="2"><path d="M1.500 1L6 5 1.500 9" /></svg>
        </ScrollArrow>
      </ScrollRow>

      <SelectionBar>
        <Grip $edge />
        <SelectionBody>
          <Field $w={128}>
            <FieldLabel htmlFor="rate">Taux du projet (Hz)</FieldLabel>
            <Select id="rate" text="44100" w={100} white />
          </Field>
          <Bars />
          <Field $w={169}>
            <FieldLabel htmlFor="snap">Se coller à (magnétique)</FieldLabel>
            <Select id="snap" text="Éteint" w={138} />
          </Field>
          <Bars />
          <Field $w={185}>
            <FieldLabel as="span">Position audio</FieldLabel>
            <Time label="Position audio" d="-" />
          </Field>
          <Bars />
          <Field $w={375}>
            <Select id="range" label="Mode de sélection" text="Début et fin de la sélection" />
            <TimeRow>
              <Time label="Début de la sélection" d="0" />
              <Time label="Fin de la sélection" d="0" />
            </TimeRow>
          </Field>
        </SelectionBody>
      </SelectionBar>
    </Window>
  );
}
